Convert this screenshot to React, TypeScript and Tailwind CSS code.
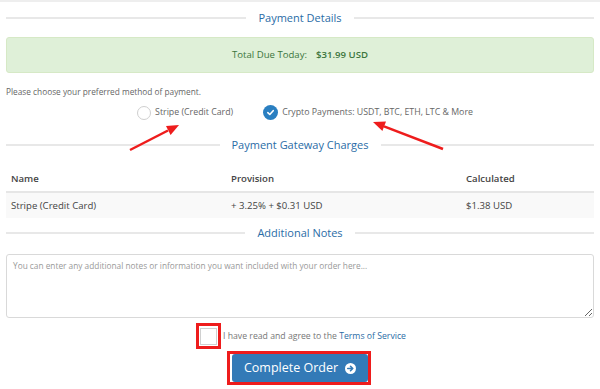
import React from "react";

// Section title with rules on both sides
function SectionTitle({ text }: { text: string }) {
  return (
    <div className="flex items-center gap-3">
      <div className="h-[2px] flex-1 bg-[#e8e8e8]" />
      <span className="text-[11px] text-[#2a6ca6] leading-none">{text}</span>
      <div className="h-[2px] flex-1 bg-[#e8e8e8]" />
    </div>
  );
}

export default function App() {
  return (
    <div
      className="relative w-[600px] h-[389px] overflow-hidden bg-white border-t-2 border-[#eeeeee] px-[6px] text-[#555]"
      style={{ fontFamily: '"Open Sans", "Noto Sans", sans-serif' }}
    >
      {/* Payment Details */}
      <div className="pt-[10px]">
        <SectionTitle text="Payment Details" />
      </div>

      <div className="mt-[14px] h-[36px] flex items-center justify-center rounded-[3px] border border-[#d6e9c6] bg-[#dff0d8] text-[9.6px] text-[#3c763d]">
        <span>Total Due Today:</span>
        <span className="ml-[9px] font-semibold">$31.99 USD</span>
      </div>

      <p className="mt-[15px] text-[8.3px] text-[#666] leading-none">
        Please choose your preferred method of payment.
      </p>

      {/* Payment methods */}
      <div className="mt-[9px] flex justify-center pl-[10px] gap-[30px] text-[8.8px] text-[#666]">
        <label className="flex items-center gap-[4px]">
          <span className="w-[14px] h-[14px] rounded-full border border-[#cfcfcf] bg-white" />
          <span>Stripe (Credit Card)</span>
        </label>
        <label className="flex items-center gap-[4px]">
          <span className="w-[15px] h-[15px] rounded-full bg-[#2a7fc1] flex items-center justify-center">
            <svg width="9" height="9" viewBox="0 0 10 10">
              <path d="M2 5.2 L4.2 7.2 L8 3" fill="none" stroke="white" strokeWidth="1.8" strokeLinecap="round" strokeLinejoin="round" />
            </svg>
          </span>
          <span>Crypto Payments: USDT, BTC, ETH, LTC &amp; More</span>
        </label>
      </div>

      {/* Payment Gateway Charges */}
      <div className="mt-[19px]">
        <SectionTitle text="Payment Gateway Charges" />
      </div>

      <table className="mt-[17px] w-full text-[9.6px] text-[#444] border-collapse">
        <thead>
          <tr className="border-b-2 border-[#e6e6e6]">
            <th className="text-left font-semibold px-[5px] h-[25px] w-[220px]">Name</th>
            <th className="text-left font-semibold px-[5px] w-[235px]">Provision</th>
            <th className="text-left font-semibold px-[5px]">Calculated</th>
          </tr>
        </thead>
        <tbody>
          <tr className="bg-[#f9f9f9]">
            <td className="px-[5px] h-[26px]">Stripe (Credit Card)</td>
            <td className="px-[5px]">+ 3.25% + $0.31 USD</td>
            <td className="px-[5px]">$1.38 USD</td>
          </tr>
        </tbody>
      </table>

      {/* Additional Notes */}
      <div className="mt-[9px]">
        <SectionTitle text="Additional Notes" />
      </div>

      <textarea
        className="mt-[16px] block w-full h-[64px] rounded-[3px] border border-[#d9d9d9] px-[6px] py-[5px] text-[8.3px] text-[#555] placeholder:text-[#999] outline-none"
        placeholder="You can enter any additional notes or information you want included with your order here..."
      />

      {/* Terms */}
      <div className="mt-[5px] flex items-center justify-center pl-[2px] gap-[2px]">
        <div className="w-[25px] h-[26px] border-[3px] border-[#ee1c1c] flex items-center justify-center">
          <span className="w-[17px] h-[17px] border border-[#d0d0d0] bg-white" />
        </div>
        <span className="text-[8.7px] text-[#777]">
          I have read and agree to the <span className="text-[#2a6ca6]">Terms of Service</span>
        </span>
      </div>

      {/* Complete Order */}
      <div className="mt-[2px] flex justify-center pr-[2px]">
        <div className="border-[3px] border-[#ee1c1c] pl-[2px] pr-[0px] py-[0px]">
          <button className="h-[28px] w-[136px] bg-[#337ab7] rounded-[3px] text-white text-[12.5px] flex items-center justify-center gap-[7px]">
            <span>Complete Order</span>
            <svg width="11" height="11" viewBox="0 0 12 12">
              <circle cx="6" cy="6" r="6" fill="white" />
              <path d="M3 6 H8.5 M6 3.5 L8.5 6 L6 8.5" fill="none" stroke="#337ab7" strokeWidth="1.7" strokeLinecap="round" strokeLinejoin="round" />
            </svg>
          </button>
        </div>
      </div>

      {/* Annotation arrows */}
      <svg className="absolute left-0 top-0 pointer-events-none" width="600" height="389">
        <line x1="130" y1="148" x2="168" y2="128.5" stroke="#ee1c1c" strokeWidth="2.5" />
        <polygon points="179,123 170.6,133 166,124" fill="#ee1c1c" />
        <line x1="443" y1="147" x2="384" y2="124.3" stroke="#ee1c1c" strokeWidth="2.5" />
        <polygon points="373,120 386,119.6 382.4,129" fill="#ee1c1c" />
      </svg>
    </div>
  );
}
